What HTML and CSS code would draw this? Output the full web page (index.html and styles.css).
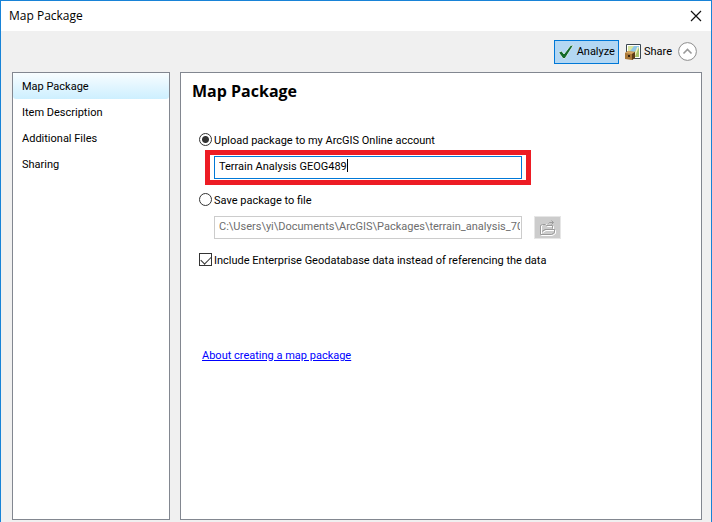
FILE: index.html
```html
<!DOCTYPE html>
<html lang="en">
<head>
<meta charset="utf-8">
<title>Map Package</title>
<link rel="stylesheet" href="styles.css">
</head>
<body>
<div class="window">
  <header class="titlebar">
    <span class="caption">Map Package</span>
    <button class="close" type="button" aria-label="Close">
      <svg width="12" height="12" viewBox="0 0 12 12"><path d="M1 1l10 10M11 1L1 11" fill="none" stroke="#111" stroke-width="1.2"/></svg>
    </button>
  </header>
  <div class="toolbar">
    <button class="tool active" type="button">
      <svg width="16" height="16" viewBox="0 0 16 16"><path d="M.7 8.500l2.800-1.500 2.500 3L12.500 1.500 15.500 1 7 14.500H5z" fill="#146b29" stroke="#e3f0f4" stroke-width=".8"/></svg>
      <span>Analyze</span>
    </button>
    <button class="tool" type="button">
      <svg width="16" height="16" viewBox="0 0 16 16"><path d="M1.500.5h14v14h-14z" fill="#fff" stroke="#3c4852"/><path d="M3 2h11v11H3z" fill="#8fc6e8"/><path d="M3 2h6L6 6 3 8z" fill="#d9e6a0"/><path d="M14 4v9H7l2-5z" fill="#a9c36a"/><path d="M9 13l4-10" stroke="#f6f2c0" stroke-width="1.500"/><path d="M0 9l3-2 7 1v6l-3 2-7-1z" fill="#a87838"/><path d="M0 9l3-2 7 1-3 2z" fill="#d5a561"/><path d="M7 10l3-2v6l-3 2z" fill="#5e3d18"/><path d="M3 11h2v2H3z" fill="#332211"/></svg>
      <span>Share</span>
    </button>
    <button class="collapse" type="button" aria-label="Collapse">
      <svg width="19" height="19" viewBox="0 0 19 19"><circle cx="9.500" cy="9.500" r="8.900" fill="#fff" stroke="#8c8c8c"/><path d="M5.500 11.500l4-4 4 4" fill="none" stroke="#999" stroke-width="1.600"/></svg>
    </button>
  </div>
  <div class="panes">
    <nav class="sidebar">
      <a class="item selected" href="#package">Map Package</a>
      <a class="item" href="#description">Item Description</a>
      <a class="item" href="#files">Additional Files</a>
      <a class="item" href="#sharing">Sharing</a>
    </nav>
    <main class="content">
      <h1>Map Package</h1>
      <label class="option"><input class="radio" type="radio" name="target" checked><span>Upload package to my ArcGIS Online account</span></label>
      <div class="highlight">
        <input class="field focused" type="text" aria-label="Package name" value="Terrain Analysis GEOG489">
        <span class="caret"></span>
      </div>
      <label class="option"><input class="radio" type="radio" name="target"><span>Save package to file</span></label>
      <div class="file">
        <input class="field" type="text" aria-label="Package file" value="C:\Users\yi\Documents\ArcGIS\Packages\terrain_analysis_701" disabled>
        <button class="browse" type="button" aria-label="Browse" disabled>
          <svg width="18" height="18" viewBox="0 0 18 18" fill="none"><path d="M2.500 16.500v-10l2-1h3l1 2h6v3M2.500 16.500h11l3-2v-3H7l-3 2" stroke="#fff"/><path d="M1.500 15.500v-9l2-1h3l1 1h6v3M1.500 15.500h11l3-2v-3H6l-3 2M9.500 4.500l1-1h4M12.500 1.500l2 2-2 2" stroke="#9b9b9b"/></svg>
        </button>
      </div>
      <label class="option"><input class="check" type="checkbox" checked><span>Include Enterprise Geodatabase data instead of referencing the data</span></label>
      <a class="about" href="#about">About creating a map package</a>
    </main>
  </div>
</div>
</body>
</html>
```
FILE: styles.css
```css
* {
  box-sizing: border-box;
}

body {
  margin: 0;
  font: 11px/14px Roboto, sans-serif;
  color: #000;
}

button,
input {
  font: inherit;
  color: inherit;
}

button {
  padding: 0;
  border: 0;
  background: none;
}

svg {
  display: block;
}

.window {
  display: flex;
  flex-direction: column;
  min-height: 100vh;
  padding-bottom: 2px;
  border: 1px solid #1883d7;
  border-bottom: 0;
  background: #f0f0f0;
}

.titlebar {
  display: flex;
  align-items: center;
  justify-content: space-between;
  height: 30px;
  padding: 0 9px 0 8px;
  background: #fff;
}

.caption {
  font: 12px/16px "Open Sans", sans-serif;
}

.toolbar {
  display: flex;
  align-items: center;
  justify-content: flex-end;
  gap: 6px;
  height: 41px;
  padding-right: 14px;
}

.tool {
  display: flex;
  align-items: center;
  gap: 3px;
  height: 24px;
}

.active {
  padding: 0 3px;
  border: 1px solid #0078d7;
  background: #b3d7f3;
}

.panes {
  display: flex;
  flex: 1;
  gap: 10px;
  padding: 0 9px 0 11px;
}

.sidebar,
.content {
  border: 1px solid #828790;
  background: #fff;
}

.sidebar {
  flex: 0 0 158px;
}

.item {
  display: block;
  padding: 7px 9px 5px;
  color: #000;
  text-decoration: none;
}

.selected {
  border-radius: 3px;
  background: linear-gradient(#f8fdff, #cdefff);
}

.content {
  flex: 1;
  min-width: 0;
  padding: 8px 17px;
}

h1 {
  margin: 0 0 29px -6px;
  font: bold 16px/20px "Open Sans", sans-serif;
}

.option {
  display: flex;
  align-items: flex-start;
  gap: 2px;
  height: 20px;
  margin-left: 1px;
  padding-top: 3px;
}

.option span {
  padding-top: 1px;
}

.radio,
.check {
  flex: none;
  appearance: none;
  width: 13px;
  height: 13px;
  margin: 0;
  border: 1px solid #333;
  background: #fff;
}

.radio {
  border-radius: 50%;
}

.radio:checked {
  background: radial-gradient(circle, #333 3px, #fff 4px);
}

.check:checked::before {
  content: "";
  display: block;
  width: 9px;
  height: 5px;
  margin: 2px 1px;
  border: solid #333;
  border-width: 0 0 1px 1px;
  transform: rotate(-45deg);
}

.highlight {
  position: relative;
  display: flex;
  width: 326px;
  max-width: 100%;
  margin: 0 0 5px 7px;
  padding: 1px 4px;
  border: 5px solid #ed1c24;
}

.field {
  flex: 1;
  min-width: 0;
  height: 23px;
  padding: 0 1px 2px 4px;
  border: 1px solid #ccc;
  border-radius: 0;
  background: #fff;
}

.field:disabled {
  color: #6d6d6d;
}

.focused {
  border-color: #0078d7;
}

.caret {
  position: absolute;
  top: 4px;
  left: 137px;
  width: 1px;
  height: 13px;
  background: #000;
}

.file {
  display: flex;
  gap: 12px;
  width: 347px;
  max-width: 100%;
  margin: 6px 0 11px 16px;
}

.browse {
  display: grid;
  place-items: center;
  width: 27px;
  height: 23px;
  border: 1px solid #e6e6e6;
  background: #ccc;
}

.about {
  display: inline-block;
  margin: 79px 0 0 4px;
  color: #00f;
}
```
